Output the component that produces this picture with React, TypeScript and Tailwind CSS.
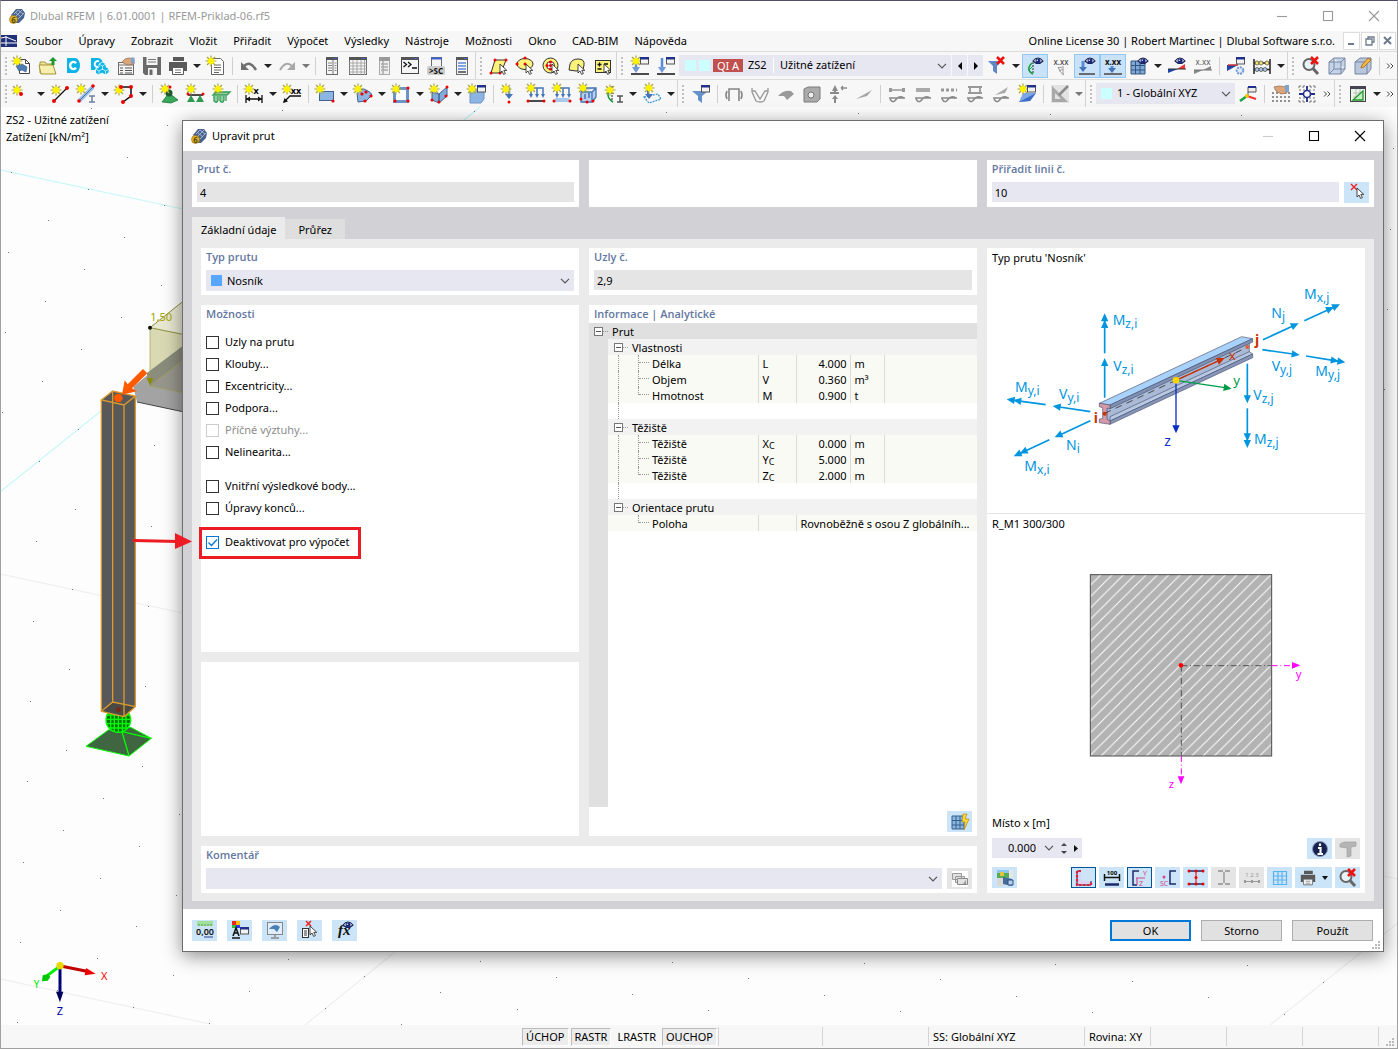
import { useState, type ReactNode } from 'react';

/* ---------- small pieces shared by the icons ---------- */

const Star = ({ x = 5, y = 5 }: { x?: number; y?: number }) => (
  <g transform={`translate(${x} ${y})`}>
    <path d="M0-5.500V5.500M-5.500 0H5.500M-4-4L4 4M4-4L-4 4" stroke="#a8a243" strokeWidth="1.200" />
    <path d="M0-4L1.500-2 4-1.500 2.500 0 4 2.500 1.500 2 0 4-1.500 2-4 2.500-2.500 0-4-1.500-1.500-2z" fill="#fff200" />
    <circle r="2.800" fill="#fff200" />
  </g>
);

const Dots = ({ at, r = 1.5 }: { at: number[][]; r?: number }) => (
  <g fill="#f00000">
    {at.map(([x, y], i) => (
      <circle key={i} cx={x} cy={y} r={r} />
    ))}
  </g>
);

const Cursor = ({ x = 11, y = 8 }: { x?: number; y?: number }) => (
  <path
    transform={`translate(${x} ${y})`}
    d="M0 0v9l2-2 1.600 3.400 1.800-.8-1.600-3.200h3z"
    fill="#fff"
    stroke="#333"
    strokeWidth=".9"
  />
);

const Eye = ({ x = 13, y = 5 }: { x?: number; y?: number }) => (
  <g transform={`translate(${x} ${y})`}>
    <path d="M-5 0Q0-6 5 0Q0 5-5 0z" fill="#e8ebf8" stroke="#1b2250" strokeWidth="1.100" />
    <circle r="2.500" fill="#1a2a80" />
    <circle cx="-.7" cy="-.7" r=".7" fill="#fff" />
  </g>
);

const Win = ({ x = 10, y = 1 }: { x?: number; y?: number }) => (
  <g transform={`translate(${x} ${y})`}>
    <rect x=".5" y=".5" width="8" height="6.500" fill="#f2f2f2" stroke="#555" />
    <rect width="9" height="2.500" fill="#20308c" />
  </g>
);

const RedCross = ({ x = 9, y = 1 }: { x?: number; y?: number }) => (
  <path transform={`translate(${x} ${y})`} d="M1 1L8 8M8 1L1 8" stroke="#ee1111" strokeWidth="2.600" />
);

const Page = ({ x = 4, y = 2, w = 12, h = 16 }: { x?: number; y?: number; w?: number; h?: number }) => (
  <rect x={x + 0.5} y={y + 0.5} width={w - 1} height={h - 1} fill="#f5f5f5" stroke="#6b6b6b" />
);

const Wave = () => (
  <g fill="none" stroke="#8a8a8a" strokeWidth="1.500">
    <path d="M2 14H18M3 15Q6 20 9 15.500T17 14" />
  </g>
);

const Printer = () => (
  <g>
    <path d="M5 1h11v4H5zM1 6h18v9h-3v-3H4v3H1z" fill="#595959" />
    <path d="M4.500 11.500h11v7h-11z" fill="#fff" stroke="#595959" />
    <path d="M7 14h6M7 16.500h6" stroke="#777" />
  </g>
);

const Lens = () => (
  <g fill="none" stroke="#666">
    <circle cx="8" cy="8.500" r="5.500" strokeWidth="2" fill="#e8f2fa" />
    <path d="M12 12.500l5 5.500" strokeWidth="3" />
  </g>
);

const icons: Record<string, ReactNode> = {
  new: (
    <>
      <path d="M7.500 3.500h6l4 4v10h-10z" fill="#fff" stroke="#444" />
      <path d="M13.500 3.500v4h4" fill="none" stroke="#444" />
      <path d="M4 10l6-2 5 3-1 5-4-2-3 1z" fill="#4d7db5" stroke="#2b4d80" strokeWidth=".6" />
      <Star />
    </>
  ),
  open: (
    <>
      <path d="M2 17V6h5l1.500 2H15v9z" fill="#f3e79a" stroke="#a3953c" />
      <path d="M1 9h14l3 9H3z" fill="#f8efae" stroke="#a3953c" />
      <path d="M13.500 9V5H11L15 1l4 4h-2.500v4z" fill="#1f9a2e" />
    </>
  ),
  center: (
    <>
      <path d="M3 2h8a5 7.500 0 0 1 5 7.500 5 7.500 0 0 1-5 7.500H3z" fill="#0bb3e6" />
      <path d="M12 7.200A3.300 3.600 0 1 0 12 11.800" fill="none" stroke="#fff" strokeWidth="2.400" />
    </>
  ),
  cloud: (
    <>
      <path d="M1 2h7a5 6 0 0 1 5 6v6H1z" fill="#0bb3e6" />
      <path d="M9 5.500A2.800 3 0 1 0 8 11" fill="none" stroke="#fff" strokeWidth="2" />
      <path d="M12.500 6l3.500 2v3l3 1.500v4L15.500 19 12 17l-3.500 2L5.500 17v-4L9 11V8z" fill="#0bb3e6" stroke="#fff" strokeWidth=".8" />
      <path d="M9 8l3.500 2L16 8M12.500 10v4M5.500 13l3.500 2 3.500-2M9 15v4M12.500 13l3 2 3.500-2M15.500 15v4" fill="none" stroke="#fff" strokeWidth=".7" />
    </>
  ),
  report: (
    <>
      <Page x={2} y={6} w={16} h={13} />
      <path d="M2 9h16" stroke="#777" />
      <path d="M4 12h3M4 14.500h3M4 17h3M9 12h7M9 14.500h7M9 17h7" stroke="#555" />
      <path d="M6 6l3-3 4-1 5 1v5l-6 1-3-1z" fill="#dba57c" stroke="#91684a" strokeWidth=".7" />
      <path d="M15 1.500h3.500v6H15z" fill="#7ea3cd" />
    </>
  ),
  save: (
    <>
      <path d="M1 1h18v18H3l-2-2z" fill="#6a6a6a" />
      <path d="M4.500 1h11v8h-11zM6 12h9v7H6z" fill="#f4f4f4" />
      <path d="M6 3.500h8M6 6h8" stroke="#777" />
      <path d="M7.500 13.500h3V19h-3z" fill="#6a6a6a" />
    </>
  ),
  print: <Printer />,
  list: (
    <>
      <path d="M5.500 2.500h9l3 3v13h-12z" fill="#fff" stroke="#666" />
      <path d="M8 9h7M8 11.500h7M8 14h7M8 16.500h5" stroke="#666" />
      <Star />
    </>
  ),
  undo: (
    <>
      <path d="M5 10Q11 4 17 14" fill="none" stroke="#707070" strokeWidth="2.500" />
      <path d="M2 6v8h8z" fill="#707070" />
    </>
  ),
  redo: (
    <>
      <path d="M15 10Q9 4 3 14" fill="none" stroke="#a8a8a8" strokeWidth="2" />
      <path d="M18 6v8h-8z" fill="#a8a8a8" />
    </>
  ),
  panel: (
    <>
      <Page x={4} y={1} w={12} h={18} />
      <path d="M4 1h12v3H4z" fill="#555" />
      <path d="M12 2.500h3" stroke="#4060d0" />
      <path d="M11 4v14" stroke="#777" />
      <path d="M6 7h4M6 9.500h4M6 12h4M6 14.500h4M12.500 7h2M12.500 9.500h2M12.500 12h2M12.500 14.500h2" stroke="#888" />
    </>
  ),
  table: (
    <>
      <Page x={1} y={1} w={18} h={18} />
      <path d="M1 1h18v3H1z" fill="#555" />
      <path d="M14 2.500h3" stroke="#4060d0" />
      <path d="M1 7h18M1 10h18M1 13h18M1 16h18M5 4v15M9 4v15M13 4v15M16.500 4v15" stroke="#999" strokeWidth=".8" />
    </>
  ),
  panelGray: (
    <>
      <rect x="5.500" y="1.500" width="10" height="17" fill="#eee" stroke="#aaa" />
      <path d="M5 1h11v4H5z" fill="#999" />
      <path d="M7 8h7M7 11h7M7 14h7M9 5v13" stroke="#aaa" strokeWidth="1.500" />
    </>
  ),
  console: (
    <>
      <rect x="1.500" y="1.500" width="17" height="16" fill="#f5f5f5" stroke="#444" />
      <path d="M1 1h18v3H1z" fill="#555" />
      <path d="M14 2.500h3" stroke="#4060d0" />
      <path d="M3.500 6l3 2.500-3 2.500M8 6l3 2.500L8 11M12 12h5" fill="none" stroke="#111" strokeWidth="1.300" />
    </>
  ),
  script: (
    <>
      <Page x={5} y={1} w={11} h={12} />
      <path d="M5 2.500h11" stroke="#4060d0" strokeWidth="2" />
      <rect x="1" y="10" width="18" height="9" rx="2" fill="#ccc" />
      <text x="10" y="17.500" fontSize="8" fontWeight="bold" textAnchor="middle" fill="#111">&gt;SC</text>
    </>
  ),
  panelBlue: (
    <>
      <Page x={4} y={1} w={12} h={18} />
      <path d="M4 1h12v3H4z" fill="#555" />
      <path d="M12 2.500h3" stroke="#4060d0" />
      <path d="M6 7h8M6 10h8M6 13h8" stroke="#5b8bd6" strokeWidth="1.500" />
      <path d="M6 16h8" stroke="#444" strokeWidth="1.500" />
    </>
  ),
  selPoly: (
    <>
      <path d="M6 4h11l-5 13H2z" fill="#fdf27a" stroke="#333" />
      <Dots at={[[6, 4], [17, 4], [2, 17], [11, 17]]} />
      <Cursor />
    </>
  ),
  selEllipse: (
    <>
      <ellipse cx="10" cy="8" rx="8" ry="5.500" fill="#fdf27a" stroke="#333" />
      <Dots at={[[10, 2], [2, 8], [10, 8]]} />
      <Cursor />
    </>
  ),
  selCircle: (
    <>
      <circle cx="9.500" cy="9.500" r="7.500" fill="#fdf27a" stroke="#333" />
      <circle cx="9.500" cy="9.500" r="4" fill="#fff" stroke="#333" />
      <Dots at={[[9.5, 6], [6, 9.5], [9.5, 9.5], [9.5, 13]]} />
      <Cursor />
    </>
  ),
  selFree: (
    <>
      <path d="M3 8q2-5 8-5 7 0 6 6l-1 5-7 1-7-1z" fill="#fdf27a" stroke="#333" />
      <Cursor />
    </>
  ),
  selPm: (
    <>
      <rect x="2.500" y="4.500" width="15" height="12" fill="#fdf27a" stroke="#333" />
      <path d="M4.500 8.500h4M6.500 6.500v4M4.500 13h4M11 8h4" stroke="#111" strokeWidth="1.300" />
      <Cursor />
    </>
  ),
  loadNew: (
    <>
      <path d="M6 5v10" stroke="#5b8bd6" strokeWidth="2.500" />
      <path d="M2 11h8L6 17z" fill="#6f9bd8" />
      <path d="M1 18h18" stroke="#111" strokeWidth="1.500" />
      <Star x={6} y={5} />
      <Win />
    </>
  ),
  load: (
    <>
      <path d="M6 2v10" stroke="#5b8bd6" strokeWidth="2.500" />
      <path d="M2 11h8L6 17z" fill="#6f9bd8" />
      <path d="M1 18h18" stroke="#111" strokeWidth="1.500" />
      <Win />
    </>
  ),
  filterOff: (
    <>
      <path d="M1 5h14l-5 5v8l-4-3v-5z" fill="#5d88c4" />
      <RedCross x={9} y={0} />
    </>
  ),
  support: (
    <>
      <path d="M8 6v12" stroke="#333" strokeDasharray="2 1" />
      <path d="M7 7Q0 14 8 18" fill="none" stroke="#159b3c" strokeWidth="1.500" />
      <path d="M8 10l-4 4" stroke="#159b3c" />
      <Eye />
    </>
  ),
  dims: (
    <>
      <text x="10" y="9" fontSize="8" textAnchor="middle" fill="#222">x.xx</text>
      <path d="M7 11Q9 17 13 19M7 12l4-1M8 15l4-2M12 10v9" fill="none" stroke="#999" />
    </>
  ),
  loadEye: (
    <>
      <path d="M2 18h16" stroke="#444" strokeWidth="1.500" />
      <path d="M6 5v7" stroke="#5b8bd6" strokeWidth="3" />
      <path d="M2 11h8l-4 5z" fill="#4475b8" />
      <Eye />
    </>
  ),
  loadVal: (
    <>
      <text x="10" y="9" fontSize="8" fontWeight="bold" textAnchor="middle" fill="#111">x.xx</text>
      <path d="M9 10v4" stroke="#5b8bd6" strokeWidth="3" />
      <path d="M5 12h8l-4 5z" fill="#4475b8" />
      <path d="M1 18h18" stroke="#444" strokeWidth="1.500" />
    </>
  ),
  meshEye: (
    <>
      <path d="M2 5h14v13H2z" fill="#7fa9da" stroke="#35557f" />
      <path d="M2 9.500h14M2 14h14M6.500 5v13M11 5v13" stroke="#35557f" />
      <Eye x={14} />
    </>
  ),
  diagEye: (
    <>
      <path d="M1 17v-4h10z" fill="#2144a8" />
      <path d="M10 13l8-5v5z" fill="#e33" />
      <path d="M1 13h18" stroke="#333" />
      <Eye />
    </>
  ),
  diagVal: (
    <>
      <text x="10" y="9" fontSize="8" textAnchor="middle" fill="#555">x.xx</text>
      <path d="M1 18v-4h9zM10 14l8-4v4z" fill="#888" />
      <path d="M1 14h18" stroke="#777" />
    </>
  ),
  diagGear: (
    <>
      <path d="M1 15V9h11z" fill="#2144a8" />
      <path d="M2 9h10" stroke="#c33" strokeWidth="1.500" />
      <Win />
      <circle cx="14" cy="14.500" r="3.300" fill="#dbe8fa" stroke="#6f95d3" strokeWidth="2" strokeDasharray="2 1" />
    </>
  ),
  abacus: (
    <>
      <path d="M2 3v15M18 3v15M2 7h16M2 13.500h16" stroke="#222" strokeWidth="1.500" />
      <g stroke="#443" strokeWidth=".7">
        <circle cx="5" cy="7" r="2" fill="#fae77c" />
        <circle cx="9" cy="7" r="2" fill="#fae77c" />
        <circle cx="15" cy="7" r="2" fill="#fae77c" />
        <circle cx="5" cy="13.500" r="2" fill="#a6c4ee" />
        <circle cx="9" cy="13.500" r="2" fill="#a6c4ee" />
        <circle cx="13" cy="13.500" r="2" fill="#a6c4ee" />
      </g>
    </>
  ),
  zoomOff: (
    <>
      <Lens />
      <RedCross x={9} y={0} />
    </>
  ),
  cube: (
    <path d="M2 6l5-4h11v11l-4 5H2zM2 6h12v12M14 6l4-4M7 2v11h11M7 13l-5 5" fill="#c5d3e6" stroke="#7487a3" />
  ),
  cubeEdit: (
    <>
      <path d="M2 6l5-4h11v11l-4 5H2zM2 6h12v12M14 6l4-4" fill="#b9c6dc" stroke="#7487a3" />
      <path d="M8 12l1-3 6-7 3 2-7 7z" fill="#f6b83c" stroke="#a3641e" strokeWidth=".8" />
    </>
  ),
  node: (
    <>
      <Star x={5} y={6} />
      <Dots at={[[9, 10]]} r={2} />
    </>
  ),
  line: (
    <>
      <path d="M4 17L17 4" stroke="#111" strokeWidth="1.300" />
      <Star x={6} y={6} />
      <Dots at={[[4, 17], [17, 4]]} r={2} />
    </>
  ),
  member: (
    <>
      <path d="M3 17L17 3" stroke="#9cc0ec" strokeWidth="4" />
      <path d="M3 17L17 3" stroke="#4b6f9e" strokeWidth="1" />
      <path d="M13 12h6M13 18h6M16 12v6" stroke="#6c82a6" strokeWidth="1.500" />
      <Star />
      <Dots at={[[3, 17], [17, 2]]} r={1.8} />
    </>
  ),
  polyline: (
    <>
      <path d="M7 3h10v9l-8 6" fill="none" stroke="#111" strokeWidth="1.500" />
      <Star x={5} y={6} />
      <Dots at={[[7, 3], [17, 3], [17, 12], [9, 18]]} r={2} />
    </>
  ),
  nodeSupport: (
    <>
      <path d="M10 9l-7 9 9 1 7-3z" fill="#39a85a" stroke="#14692f" strokeWidth=".7" />
      <circle cx="10" cy="9" r="3.500" fill="#1f5a30" />
      <Star x={6} y={5} />
      <Dots at={[[11, 3]]} />
    </>
  ),
  lineSupport: (
    <>
      <path d="M3 11h15" stroke="#111" strokeWidth="1.500" />
      <path d="M6 11l-4 7h8zM15 11l-4 7h8z" fill="#2f9a50" />
      <Star x={6} y={5} />
      <Dots at={[[3, 10], [18, 10]]} />
    </>
  ),
  surfSupport: (
    <>
      <path d="M2 11l3-3h14l-3 3zM3 12v5q3 3 4-1v-4M9 12v5q3 3 4-1v-4M15 12v5" fill="#8fd0a2" stroke="#359c57" strokeWidth="1.300" />
      <Star x={7} y={5} />
    </>
  ),
  dim: (
    <>
      <path d="M2 11v8M18 11v8M2 15h16" stroke="#111" strokeWidth="1.300" />
      <path d="M2 15l4-2.500v5zM18 15l-4-2.500v5z" fill="#111" />
      <text x="12" y="10" fontSize="9" fontWeight="bold" textAnchor="middle">x</text>
      <Star />
    </>
  ),
  dimXX: (
    <>
      <path d="M2 18L8 12h11" fill="none" stroke="#111" strokeWidth="1.300" />
      <path d="M1 19l1.500-5 3.500 3.500z" fill="#111" />
      <text x="14" y="10" fontSize="9" fontWeight="bold" textAnchor="middle">xx</text>
      <Star />
    </>
  ),
  surface: (
    <>
      <rect x="4.500" y="7.500" width="14" height="9" fill="#8db5e3" stroke="#3f6492" />
      <Star />
      <Dots at={[[18, 17]]} r={1.6} />
    </>
  ),
  surfCurved: (
    <>
      <path d="M4 9q5-6 9-3 5 2 6 5l-6 6-8 1z" fill="#8db5e3" stroke="#3f6492" />
      <Star />
      <Dots at={[[9, 10], [18, 12], [13, 8], [12, 17]]} r={1.6} />
    </>
  ),
  opening: (
    <>
      <rect x="3.500" y="4.500" width="13" height="13" fill="#fff" stroke="#6d94c6" strokeWidth="3" />
      <Star />
      <Dots at={[[4, 17], [17, 17], [17, 4]]} r={1.6} />
    </>
  ),
  solid: (
    <>
      <path d="M3 8l7 2v9l-7-3zM10 10l8-7v9l-8 7z" fill="#82abdc" stroke="#3f6492" />
      <Star />
      <Dots at={[[3, 16], [10, 18], [18, 3], [17, 12]]} r={1.5} />
    </>
  ),
  block: (
    <>
      <path d="M3 8l3-2h11v9l-3 4H3z" fill="#8db5e3" stroke="#6d94c6" />
      <Star />
      <Win x={10} y={1} />
    </>
  ),
  nodalLoad: (
    <>
      <path d="M9 3v8" stroke="#6f9bd8" strokeWidth="2.500" />
      <path d="M5 10h8l-4 5z" fill="#4475b8" />
      <Star x={6} y={5} />
      <Dots at={[[9, 18]]} />
    </>
  ),
  memberLoad: (
    <>
      <path d="M4 4h13v7M11 4v7M5 4v7" fill="none" stroke="#4475b8" strokeWidth="1.500" />
      <path d="M3 10h4l-2 4zM9 10h4l-2 4zM15 10h4l-2 4z" fill="#4475b8" />
      <path d="M3 17h14" stroke="#111" strokeWidth="1.500" />
      <Star x={5} y={4} />
      <Dots at={[[2, 17], [18, 17]]} />
    </>
  ),
  surfLoad: (
    <>
      <path d="M3 14h14v4H3z" fill="#a9c8ee" />
      <path d="M4 4h13v7M11 4v7M5 4v7" fill="none" stroke="#4475b8" strokeWidth="1.500" />
      <path d="M3 10h4l-2 4zM9 10h4l-2 4zM15 10h4l-2 4z" fill="#4475b8" />
      <Star x={5} y={4} />
      <Dots at={[[2, 17], [18, 17]]} />
    </>
  ),
  solidLoad: (
    <>
      <path d="M3 8l4-4h11v9l-4 5H3zM14 8v10M3 8h11l4-4" fill="#b7cfee" stroke="#4475b8" strokeWidth="1.300" />
      <path d="M7 10v5M11 9v5" stroke="#4475b8" strokeWidth="1.500" />
      <Star x={5} y={4} />
      <Dots at={[[3, 15], [9, 18], [15, 17]]} />
    </>
  ),
  imperf: (
    <>
      <path d="M8 2v16" stroke="#222" strokeDasharray="2 1" />
      <path d="M7 3Q0 12 9 18" fill="none" stroke="#159b3c" strokeWidth="1.600" />
      <path d="M13 12h6M13 18h6M16 12v6" stroke="#555" strokeWidth="1.500" />
      <Star x={6} y={6} />
    </>
  ),
  freeLoad: (
    <>
      <path d="M2 13l14-3 3 5-12 4z" fill="none" stroke="#3d9ad6" strokeDasharray="2 1" strokeWidth="1.300" />
      <path d="M6 5v8" stroke="#4475b8" strokeWidth="2" />
      <path d="M3 10h8l-4 5z" fill="#4475b8" />
      <Star x={7} y={4} />
    </>
  ),
  filterWin: (
    <>
      <path d="M1 7h16l-6 5v7l-4-3v-4z" fill="#6391cc" />
      <Win />
    </>
  ),
  g1: <path d="M5 17V5h10v12M3 7Q1 11 3 15M17 7q2 4 0 8" fill="none" stroke="#858585" strokeWidth="1.600" />,
  g2: <path d="M2 4v4l4 9Q10 19 14 17l4-9V4M2 7h3l5 8 5-8h3" fill="none" stroke="#999" strokeWidth="1.300" />,
  g3: <path d="M2 12q5-6 13-5l3 3-7 6-3-4z" fill="#9a9a9a" />,
  g4: (
    <>
      <path d="M2 5l4-2h12v12l-3 3H2z" fill="#ababab" stroke="#7b7b7b" />
      <circle cx="9" cy="11" r="3" fill="#eee" stroke="#777" />
    </>
  ),
  g5: (
    <>
      <path d="M7 1l3 6H8v3H6V7H4zM7 11l3 4H8v4H6v-4H4z" fill="#8a8a8a" />
      <path d="M13 4h6M13 4l2-2M13 4l2 2" stroke="#8a8a8a" strokeWidth="1.300" />
      <path d="M2 9h9" stroke="#8a8a8a" strokeWidth="2" />
    </>
  ),
  g6: <path d="M2 15L18 6l-5 6z" fill="#a5a5a5" />,
  w1: (
    <>
      <path d="M3 6h14" stroke="#999" strokeWidth="1.500" />
      <path d="M2 4h3v4H2zM15 4h3v4h-3z" fill="#999" />
      <Wave />
    </>
  ),
  w2: (
    <>
      <path d="M3 6h14" stroke="#aaa" strokeWidth="4" />
      <Wave />
    </>
  ),
  w3: (
    <>
      <path d="M2 6h16" stroke="#999" strokeWidth="3" strokeDasharray="3 2" />
      <Wave />
    </>
  ),
  w4: (
    <>
      <path d="M3 3h14M5 3v6M15 3v6M3 9h14" stroke="#999" strokeWidth="1.800" />
      <Wave />
    </>
  ),
  w5: (
    <>
      <path d="M4 11L17 3l-3 6z" fill="#aaa" />
      <Wave />
    </>
  ),
  planeWin: (
    <>
      <path d="M2 18l4-9h13l-6 8z" fill="#7da7e6" />
      <path d="M2 18l17-9-6 8z" fill="#3c6cc8" />
      <Star x={6} y={5} />
      <Win />
    </>
  ),
  design: (
    <>
      <path d="M1 1h18v18H1z" fill="#e2e2e2" />
      <path d="M2 2v16h16z" fill="#a8a8a8" />
      <path d="M5 9v6h6z" fill="#e2e2e2" />
      <path d="M9 11L18 2" stroke="#8a8a8a" strokeWidth="2.500" />
    </>
  ),
  axesWin: (
    <>
      <path d="M10 12V3h8v5h-8" fill="#eee" stroke="#555" />
      <path d="M10 3h8" stroke="#20308c" strokeWidth="2" />
      <path d="M9 12l9 3" stroke="#e33" strokeWidth="2" />
      <path d="M9 12l-7 5" stroke="#1aa34a" strokeWidth="2.500" />
      <circle cx="9" cy="12" r="2" fill="#f5c400" />
    </>
  ),
  gridHand: (
    <>
      <path d="M2 8v11M6 8v11M10 8v11M14 8v11M18 8v11M1 9h18M1 13h18M1 17h18" stroke="#777" strokeWidth="1.200" strokeDasharray="2 2" />
      <path d="M3 3l5-1 8 1v6l-6 1-5-3z" fill="#dba57c" stroke="#91684a" strokeWidth=".7" />
      <path d="M14 1h4v7h-4z" fill="#7ea3cd" />
    </>
  ),
  gridSnap: (
    <>
      <path d="M3 1v18M17 1v18M1 3h18M1 17h18M7 1v18M13 1v18" stroke="#777" strokeDasharray="2 2" />
      <path d="M10 2v16M2 10h16" stroke="#20308c" strokeWidth="1.800" />
      <circle cx="10" cy="10" r="3.500" fill="#fff" stroke="#20308c" strokeWidth="1.600" />
    </>
  ),
  gridGreen: (
    <>
      <rect x="2.500" y="2.500" width="15" height="15" fill="#eaf5ea" stroke="#444" />
      <path d="M2 2h16v3H2z" fill="#445" />
      <path d="M5 9h10M5 13h10M8 5v12M12 5v12" stroke="#bbb" />
      <path d="M5 16l10-9v9z" fill="#bff0bf" stroke="#27962f" strokeWidth="1.300" />
    </>
  ),
  pick: (
    <>
      <path d="M4 1l6 6M10 1L4 7" stroke="#e22" strokeWidth="1.400" />
      <Cursor x={10} y={5} />
    </>
  ),
  meshFlash: (
    <>
      <path d="M2 4h12v13H2z" fill="#8db6dc" stroke="#35618f" />
      <path d="M2 8.500h12M2 13h12M6 4v13M10 4v13" stroke="#35618f" />
      <path d="M13 2h4l-2 5h4l-5 11 1-8h-3z" fill="#ffd83a" stroke="#b58a10" strokeWidth=".7" />
    </>
  ),
  stack: (
    <>
      <path d="M2 2h16v16H2z" fill="#fff" />
      <path d="M2.500 4.500h9v6h-9zM5.500 7.500h9v6h-9z" fill="#e2e2e2" stroke="#999" />
      <path d="M7.500 9.500h10v6h-10z" fill="#e2e2e2" stroke="#888" />
      <path d="M13 15l3-4v4z" fill="#999" />
    </>
  ),
  units: (
    <>
      <path d="M2 1h16v5H2z" fill="#9fe09a" />
      <path d="M4 4v2M7 4v2M10 4v2M13 4v2M16 4v2" stroke="#5a9a58" />
      <text x="10" y="15" fontSize="9" fontWeight="600" textAnchor="middle" fill="#111">0,00</text>
      <path d="M9 17h9" stroke="#2a3f9a" />
    </>
  ),
  colors: (
    <>
      <path d="M2 1h4v4H2z" fill="#e22" />
      <path d="M6 1h4v4H6z" fill="#fb0" />
      <path d="M2 5h4v3H2z" fill="#3b3" />
      <path d="M6 5h4v3H6z" fill="#33e" />
      <path d="M3 16l3-8 3 8M4 13h4M2 18h8" fill="none" stroke="#111" strokeWidth="1.500" />
      <Win x={10} y={7} />
    </>
  ),
  monitor: (
    <>
      <rect x="2.500" y="2.500" width="15" height="12" fill="#dfeefa" stroke="#888" />
      <path d="M4 9q6-7 11-2l-3 5-3-3z" fill="#4b7fb8" />
      <path d="M10 14v3M6 18h8" stroke="#888" strokeWidth="1.500" />
    </>
  ),
  selList: (
    <>
      <path d="M6 1l5 5M11 1L6 6" stroke="#e22" strokeWidth="1.500" />
      <rect x="2.500" y="8.500" width="6" height="9" fill="#fff" stroke="#333" />
      <path d="M4 11h3M4 13h3M4 15h3" stroke="#333" />
      <Cursor x={10} y={6} />
    </>
  ),
  fx: (
    <>
      <text x="3" y="15" fontSize="15" fontWeight="bold" fontStyle="italic" fontFamily="Liberation Serif" fill="#111">fx</text>
      <Eye x={13} y={5} />
    </>
  ),
  info: (
    <>
      <circle cx="10" cy="10" r="7.500" fill="#16224f" stroke="#8795bb" />
      <path d="M10 4.500v2.500M8 9h2.500v6M7.500 15h5.500" stroke="#fff" strokeWidth="2.200" />
    </>
  ),
  tshape: (
    <path d="M2 5l4-2h12v4l-5 1v9l-4 1V9L2 8z" fill="#b5b5b5" stroke="#999" strokeWidth=".6" />
  ),
  image: (
    <>
      <path d="M2 2h12v8H2z" fill="#57ad57" />
      <path d="M2 2h12v3H2z" fill="#8bc7ee" />
      <path d="M5 4h4v4H5z" fill="#e0c43a" />
      <path d="M2 10h8v8H2z" fill="#d8d8d8" />
      <path d="M14 2h4v8h-4z" fill="#e6e6e6" />
      <path d="M8 9l9 2v7l-9-2z" fill="#456a9a" />
      <path d="M13 12h5v5h-5z" fill="#b8d0ee" stroke="#2b4d80" />
    </>
  ),
  secPoints: (
    <>
      <path d="M3 3h4v8q0 2 2 2h8v4H3z" fill="#dcd3f2" />
      <path d="M3 3h4M3 3v14h14v-4" fill="none" stroke="#1b2a6b" />
      <path d="M7 3H3v14h14v-4" fill="none" stroke="#e02030" strokeWidth="2.200" strokeDasharray="2.500 1.500" />
    </>
  ),
  sec100: (
    <>
      <text x="10" y="7" fontSize="6" fontWeight="bold" textAnchor="middle">100</text>
      <path d="M2.500 6v7M17.500 6v7M3 9.500h14" stroke="#111" strokeWidth="1.500" />
      <path d="M3 16.500h14" stroke="#1b2a6b" strokeWidth="2.500" />
    </>
  ),
  secAxes: (
    <>
      <path d="M9 3H3v14h4" fill="none" stroke="#1b2a6b" strokeWidth="1.500" />
      <path d="M6 10h9M7 10v7" stroke="#d04a8c" strokeWidth="1.200" />
      <text x="13" y="8" fontSize="7" fill="#d04a8c">Y</text>
      <text x="9" y="18" fontSize="7" fill="#d04a8c">Z</text>
    </>
  ),
  secSC: (
    <>
      <path d="M18 3h-6v13h6" fill="none" stroke="#1b2a6b" strokeWidth="1.500" />
      <circle cx="6" cy="9" r="1.500" fill="#d04a8c" />
      <text x="2" y="18" fontSize="7" fill="#d04a8c">SC</text>
    </>
  ),
  secI: (
    <>
      <path d="M10 3v13" stroke="#e22" strokeWidth="1.200" />
      <path d="M3 3h14M3 16h14" stroke="#1b2a6b" strokeWidth="1.500" />
      <Dots at={[[3, 3], [10, 3], [17, 3], [10, 9.5], [3, 16], [10, 16], [17, 16]]} />
    </>
  ),
  secIGray: <path d="M4 3h5M11 3h5M4 16h5M11 16h5M10 4v11" stroke="#8f8f8f" strokeWidth="1.300" />,
  sec123: (
    <>
      <text x="10" y="9" fontSize="6" textAnchor="middle" fill="#999">1 2 3</text>
      <path d="M3 13.500h14" stroke="#999" />
      <path d="M3 12v3M10 12v3M17 12v3" stroke="#999" strokeWidth="2" />
    </>
  ),
  secGrid: <path d="M3.500 3.500h13v13h-13zM3.500 8h13M3.500 12h13M8 3.500v13M12 3.500v13" fill="none" stroke="#5ab4f0" strokeWidth="1.200" />,
};

const Icon = ({ name }: { name: string }) => (
  <svg viewBox="0 0 20 20" className="size-5 shrink-0 overflow-visible" aria-hidden="true">
    {icons[name]}
  </svg>
);

const AppLogo = () => (
  <svg viewBox="0 0 16 16" className="size-4 shrink-0" aria-hidden="true">
    <path d="M2 7l5-6 6 0 3 4-1 5-5 5-3 0z" fill="#4a638e" />
    <path d="M5 6l4-4M7 8l6-6M9 11l6-6M6 4l6 5M9 2l5 4" stroke="#b4c6e2" strokeWidth=".8" />
    <circle cx="4.500" cy="11.500" r="4" fill="#e5b729" stroke="#8d6a10" strokeWidth=".6" />
    <text x="4.500" y="14.500" fontSize="8" fontWeight="bold" textAnchor="middle" fill="#5f480b">6</text>
  </svg>
);

const Chevron = () => (
  <svg viewBox="0 0 10 6" className="pointer-events-none absolute right-1 top-1/2 h-1.5 w-2.5 -translate-y-1/2" aria-hidden="true">
    <path d="M1 .8l4 4 4-4" fill="none" stroke="#555" strokeWidth="1.200" />
  </svg>
);

/* ---------- tool bars ---------- */

// '|' separator, ':' start of a new bar, 'v' drop-down arrow, '-v' greyed arrow, '>>' overflow, '*' prefix = pressed
const barOne =
  'new open center cloud report save print v list | undo v redo -v | panel table panelGray console script panelBlue : selPoly selEllipse selCircle selFree selPm : loadNew load';
const barOneEnd =
  'filterOff v *support dims *loadEye *loadVal meshEye v diagEye diagVal | diagGear abacus v : zoomOff cube cubeEdit | >>';
const barTwo =
  'node v line member v polyline v | nodeSupport lineSupport surfSupport | dim v dimXX | surface v surfCurved v opening v solid v block | nodalLoad memberLoad surfLoad solidLoad imperf v freeLoad v : filterWin | g1 g2 g3 g4 g5 g6 | w1 w2 w3 w4 w5 planeWin | design -v :';
const barTwoEnd = 'axesWin | gridHand gridSnap >> : gridGreen v >>';

const Handle = ({ first = false }: { first?: boolean }) => (
  <div className={first ? 'flex h-full w-2 items-center pl-1' : 'flex h-full w-[11px] items-center border-l border-[#d4d4d4] pl-1'}>
    <div className="h-[18px] border-l-2 border-dotted border-[#c0c0c0]" />
  </div>
);

function BarItems({ items }: { items: string }) {
  return items.split(' ').map((item, i) => {
    if (item === '|')
      return (
        <div key={i} className="flex w-[7px] justify-center">
          <div className="h-[18px] w-px bg-[#cfcfcf]" />
        </div>
      );
    if (item === ':') return <Handle key={i} />;
    if (item === 'v' || item === '-v')
      return (
        <button key={i} aria-label="Více" disabled={item === '-v'} className="flex w-3 justify-center text-[#222] disabled:text-[#777]">
          <svg viewBox="0 0 8 4" className="h-1 w-2">
            <path d="M0 0h8L4 4z" fill="currentColor" />
          </svg>
        </button>
      );
    if (item === '>>')
      return (
        <button key={i} aria-label="Další příkazy" className="flex w-3.5 justify-center">
          <svg viewBox="0 0 8 6" className="h-1.5 w-2">
            <path d="M1 .5L3.500 3 1 5.500M4.500 .5L7 3 4.500 5.500" fill="none" stroke="#444" />
          </svg>
        </button>
      );
    const pressed = item.startsWith('*');
    const name = pressed ? item.slice(1) : item;
    return (
      <button
        key={i}
        aria-label={name}
        className={`flex h-6 w-[26px] shrink-0 items-center justify-center ${pressed ? 'border border-[#92c8f2] bg-[#c9e2f7]' : ''}`}
      >
        <Icon name={name} />
      </button>
    );
  });
}

const menus = ['Soubor', 'Úpravy', 'Zobrazit', 'Vložit', 'Přiřadit', 'Výpočet', 'Výsledky', 'Nástroje', 'Možnosti', 'Okno', 'CAD-BIM', 'Nápověda'];

function WindowButtons({ color, minColor }: { color: string; minColor: string }) {
  return (
    <div className="ml-auto flex h-full">
      {['M0 5.500h10', 'M.5.500h9v9h-9z', 'M0 0l10 10M10 0L0 10'].map((d, i) => (
        <button key={d} aria-label={['Minimalizovat', 'Maximalizovat', 'Zavřít'][i]} className="flex h-full w-[46px] items-center justify-center">
          <svg viewBox="0 0 10 10" className="size-2.5 overflow-visible">
            <path d={d} fill="none" stroke={i === 0 ? minColor : color} strokeWidth="1.100" />
          </svg>
        </button>
      ))}
    </div>
  );
}

/* ---------- model view ---------- */

const gridPoints: number[][] = [];
for (let m = -20; m < 40; m++) {
  for (let n = -40; n < 50; n++) {
    const x = 120 + m * 76.1 - n * 39.58;
    const y = 210 + m * 16.5 + n * 31.83;
    if (x > 0 && x < 2000 && y > 0 && y < 1400) gridPoints.push([Math.round(x), Math.round(y)]);
  }
}

function ModelView() {
  return (
    <svg className="absolute inset-0 size-full" aria-label="Model">
      <g transform="translate(-1 -107)">
        <path d="M0 492L101 411M154 372L480 107M0 170L183 209" stroke="#c8f7f8" strokeWidth="1.200" />
        <path d="M0 574L183 613M0 979L210 1024M305 1025L395 952M1270 1025L1398 923M1384 876L1398 879" stroke="#efefef" strokeWidth="1.200" />
      </g>
      {gridPoints.map(([x, y]) => (
        <rect key={`${x}-${y}`} x={x} y={y} width="1" height="1" fill="#777" />
      ))}
      {/* column with slab corner and support, drawn at three units per pixel */}
      <g transform="translate(-1 183) scale(.33333)">
        <path d="M400 290L548 168V365L411 336z" fill="#a3a3a3" />
        <path d="M411 336L548 365" stroke="#444" strokeWidth="3" />
        <path d="M450 113L548 35V210L450 288z" fill="#d9d9b4" />
        <path d="M450 113L548 35V133z" fill="#e7e7d2" />
        <path d="M440 250L548 168V212L450 288z" fill="#8a8c7c" />
        <path d="M450 288L548 212V308z" fill="#96968c" />
        <path d="M450 113L548 35M450 113L548 133" stroke="#8f8f40" strokeWidth="3" />
        <path d="M450 113V270M450 288L548 308M450 288L548 212" fill="none" stroke="#a2a250" strokeWidth="2" />
        <path d="M440 264h20l-10 22z" fill="#8c8c00" />
        <circle cx="450" cy="113" r="6" fill="#111" />
        <text x="451" y="94" fontSize="33" fill="#a6a600">1,50</text>
        <path d="M325 1320L258 1369 387 1398 454 1345 392 1312z" fill="#3f6640" stroke="#0f0" strokeWidth="3" />
        <path d="M362 1312L387 1398M366 1325L454 1345" stroke="#0f0" strokeWidth="4" />
        <circle cx="355" cy="1290" r="37" fill="#04730a" stroke="#0f0" strokeWidth="4" />
        <path d="M320 1275h70M318 1288h74M320 1301h70M327 1314h56M332 1262v56M343 1256v70M355 1254v73M367 1256v70M378 1262v56" stroke="#0f0" strokeWidth="4" />
        <path d="M304 330L338 303 406 318V1250L372 1280 304 1264z" fill="#585858" />
        <path d="M304 1264L338 1236 406 1250 372 1280z" fill="#404038" opacity=".6" />
        <circle cx="355" cy="1259" r="7" fill="#7a2814" />
        <path d="M304 330L338 303 406 318 372 345zM304 330V1264L372 1280 406 1250V318M338 303V1236M372 345V1280M304 1264L338 1236 406 1250" fill="none" stroke="#dc9a2e" strokeWidth="4" />
        <circle cx="355" cy="324" r="13" fill="#ff5a00" />
        <path d="M429 237L442 250 396 295 411 304 366 314 374 271 383 283z" fill="#ff5a00" />
      </g>
      {/* global axes */}
      <g transform="translate(-1 733) scale(.33333)">
        <path d="M182 378L260 394" stroke="#c00000" strokeWidth="9" />
        <path d="M258 384L287 401 254 406z" fill="#f00000" />
        <path d="M180 380V460" stroke="#000078" strokeWidth="9" />
        <path d="M168 455h22L180 487z" fill="#00005a" />
        <path d="M178 380L140 408" stroke="#0e0" strokeWidth="9" />
        <path d="M128 406l17-4 6 9-8 11-17 2z" fill="#00c800" />
        <circle cx="180" cy="377" r="11" fill="#e6d800" />
        <text x="303" y="419" fontSize="33" fill="#f00">X</text>
        <text x="101" y="443" fontSize="30" fill="#0e0">Y</text>
        <text x="170" y="525" fontSize="33" fill="#00a">Z</text>
      </g>
    </svg>
  );
}

/* ---------- dialog ---------- */

const Heading = ({ children, htmlFor }: { children: ReactNode; htmlFor?: string }) => (
  <label htmlFor={htmlFor} className="block h-[18px] px-[5px] font-['Open_Sans','Noto_Sans',sans-serif] text-[11px] font-semibold leading-[18px] text-[#64779f]">
    {children}
  </label>
);

function Field({ id, label, value, readOnly, children }: { id: string; label: string; value: string; readOnly?: boolean; children?: ReactNode }) {
  return (
    <div className="h-[47px] bg-white">
      <Heading htmlFor={id}>{label}</Heading>
      <div className="mt-1 flex gap-[5px] px-[5px]">
        <input
          id={id}
          defaultValue={value}
          readOnly={readOnly}
          className={`h-5 w-full min-w-0 px-[3px] outline-none ${readOnly ? 'bg-[#e5e5e5]' : 'bg-[#e7e7f2]'}`}
        />
        {children}
      </div>
    </div>
  );
}

function ToolButton({ name, state = 'on' }: { name: string; state?: 'on' | 'off' | 'pressed' }) {
  return (
    <button
      aria-label={name}
      disabled={state === 'off'}
      className={`flex h-[21px] w-[25px] shrink-0 items-center justify-center ${
        state === 'off' ? 'bg-[#e5e5e5]' : state === 'pressed' ? 'border border-[#005499] bg-[#cce4f7]' : 'bg-[#cce4f7]'
      }`}
    >
      <Icon name={name} />
    </button>
  );
}

function Option({ label, checked, disabled, children }: { label: string; checked?: boolean; disabled?: boolean; children?: ReactNode }) {
  const [on, setOn] = useState(!!checked);
  return (
    <label className={`relative flex h-[22px] w-fit items-center gap-1.5 ${disabled ? 'text-[#8c8c8c]' : ''}`}>
      <span className="relative flex size-[13px]">
        <input
          type="checkbox"
          checked={on}
          disabled={disabled}
          onChange={(e) => setOn(e.target.checked)}
          className="size-[13px] appearance-none border border-[#333] bg-white checked:border-[#0078d7] disabled:border-[#ccc]"
        />
        {on && (
          <svg viewBox="0 0 13 13" className="pointer-events-none absolute inset-0 size-[13px]">
            <path d="M2.500 6.500l3 3 5.500-6" fill="none" stroke="#0078d7" strokeWidth="1.300" />
          </svg>
        )}
      </span>
      {label}
      {children}
    </label>
  );
}

type Leaf = { name: string; symbol?: ReactNode; value: string; unit?: ReactNode };

const groups: { title: string; rows: Leaf[] }[] = [
  {
    title: 'Vlastnosti',
    rows: [
      { name: 'Délka', symbol: 'L', value: '4.000', unit: 'm' },
      { name: 'Objem', symbol: 'V', value: '0.360', unit: 'm³' },
      { name: 'Hmotnost', symbol: 'M', value: '0.900', unit: 't' },
    ],
  },
  {
    title: 'Těžiště',
    rows: [
      { name: 'Těžiště', symbol: <>X<small className="align-[-1px] text-[9px]">C</small></>, value: '0.000', unit: 'm' },
      { name: 'Těžiště', symbol: <>Y<small className="align-[-1px] text-[9px]">C</small></>, value: '5.000', unit: 'm' },
      { name: 'Těžiště', symbol: <>Z<small className="align-[-1px] text-[9px]">C</small></>, value: '2.000', unit: 'm' },
    ],
  },
  { title: 'Orientace prutu', rows: [{ name: 'Poloha', value: 'Rovnoběžně s osou Z globálníh...' }] },
];

const Toggle = () => (
  <button aria-label="Sbalit" className="flex size-[9px] shrink-0 items-center justify-center border border-[#777] bg-white">
    <span className="h-px w-[5px] bg-[#555]" />
  </button>
);

const Cell = ({ children, className = '' }: { children?: ReactNode; className?: string }) => (
  <td className="border-l border-[#dadada] bg-[#f9faf3] p-0">
    <div className={`h-4 whitespace-nowrap leading-[18px] ${className}`}>{children}</div>
  </td>
);

function InfoTable() {
  return (
    <table className="w-full table-fixed border-collapse">
      <colgroup>
        <col className="w-[19px]" />
        <col className="w-[150px]" />
        <col className="w-[38px]" />
        <col className="w-[54px]" />
        <col className="w-[34px]" />
        <col />
      </colgroup>
      <tbody>
        <tr className="h-4 bg-[#e0e0e0]">
          <td colSpan={6} className="p-0">
            <div className="flex h-4 items-center pl-[5px] leading-[18px]">
              <Toggle />
              <span className="mr-1 w-[5px] border-t border-dotted border-[#999]" />
              <span className="h-4">Prut</span>
            </div>
          </td>
        </tr>
        {groups.map((group, g) => {
          const lastGroup = g === groups.length - 1;
          return [
            <tr key={group.title} className="h-4">
              <td className="p-0" />
              <td colSpan={5} className="bg-[#f2f2f2] p-0">
                <div className="flex h-4 items-center pl-1.5 leading-[18px]">
                  <Toggle />
                  <span className="mr-1 w-[5px] border-t border-dotted border-[#999]" />
                  <span className="h-4">{group.title}</span>
                </div>
              </td>
            </tr>,
            ...group.rows.map((row, i) => (
              <tr key={group.title + i} className="h-4">
                <td className="p-0" />
                <td className="bg-[#f9faf3] p-0">
                  <div className="flex h-4 leading-[18px]">
                    <span className={`w-[11px] ${lastGroup ? '' : 'border-r border-dotted border-[#999]'}`} />
                    <span className={`w-5 border-r border-dotted border-[#999] ${i === group.rows.length - 1 ? 'h-2' : ''}`} />
                    <span className="mr-[3px] h-2 w-2.5 border-b border-dotted border-[#999]" />
                    {row.name}
                  </div>
                </td>
                <Cell className="pl-1">{row.symbol}</Cell>
                {row.unit ? (
                  <>
                    <Cell className="pr-[3px] text-right">{row.value}</Cell>
                    <Cell className="pl-1">{row.unit}</Cell>
                    <Cell />
                  </>
                ) : (
                  <td colSpan={3} className="border-l border-[#dadada] bg-[#f9faf3] p-0">
                    <div className="h-4 whitespace-nowrap pl-1 leading-[18px]">{row.value}</div>
                  </td>
                )}
              </tr>
            )),
            !lastGroup && (
              <tr key={group.title + 'gap'} className="h-4">
                <td className="p-0" />
                <td colSpan={5} className="p-0">
                  <div className="h-4 w-[11px] border-r border-dotted border-[#999]" />
                </td>
              </tr>
            ),
          ];
        })}
      </tbody>
    </table>
  );
}

type ForceProps = { from: number[]; to: number[]; double?: boolean; color?: string; width?: number };

function Force({ from, to, double, color = '#0095df', width = 5 }: ForceProps) {
  const angle = (Math.atan2(to[1] - from[1], to[0] - from[0]) * 180) / Math.PI;
  const length = Math.hypot(to[0] - from[0], to[1] - from[1]);
  return (
    <g transform={`translate(${from[0]} ${from[1]}) rotate(${angle})`} fill={color}>
      <path d={`M0 0H${length - 10}`} stroke={color} strokeWidth={width} />
      <path d={`M${length} 0l-24-11v22z`} />
      {double && <path d={`M${length - 20} 0l-24-11v22z`} />}
    </g>
  );
}

const Sub = ({ x, y, main, sub }: { x: number; y: number; main: string; sub: string }) => (
  <text x={x} y={y} fontSize="42" fill="#0095df">
    {main}
    <tspan dy="9" fontSize="36">{sub}</tspan>
  </text>
);

function BeamPicture() {
  return (
    <svg viewBox="21 90 1134 729" className="mx-auto block h-[243px] w-[378px]" aria-label="Typ prutu Nosník">
      <path d="M380 502L808 302V346L380 548z" fill="#a9b9d6" stroke="#4c5674" strokeWidth="2" />
      <path d="M390 530L808 335 818 342 390 543z" fill="#b9c8e2" stroke="#4c5674" strokeWidth="2" />
      <path d="M390 543L818 342V353L390 553z" fill="#8796b8" stroke="#4c5674" strokeWidth="2" />
      <path d="M358 490L785 290 818 296 390 495z" fill="#a9d2fb" stroke="#4c5674" strokeWidth="2" />
      <path d="M390 495L818 296V306L390 506z" fill="#7f90b4" stroke="#4c5674" strokeWidth="2" />
      <path d="M358 490L390 495V506L381 504V538L390 543V553L358 548V537L368 536V503L358 500z" fill="#d79aa8" stroke="#4c5674" strokeWidth="2" />
      <path d="M374 520L802 322" stroke="#333" strokeWidth="2.500" strokeDasharray="20 16" />
      <circle cx="374" cy="521" r="6" fill="#c83200" />
      <circle cx="802" cy="321" r="6" fill="#e0603c" />
      <Force from={[588, 421]} to={[734, 354]} color="#c83200" width={4} />
      <Force from={[588, 421]} to={[755, 446]} color="#009b48" width={4} />
      <Force from={[588, 421]} to={[588, 580]} color="#0a2fc0" width={4} />
      <circle cx="588" cy="421" r="10" fill="#ffd500" />
      <text x="746" y="360" fontSize="40" fill="#c83200">x</text>
      <text x="760" y="434" fontSize="40" fill="#009b48">y</text>
      <text x="553" y="618" fontSize="42" fill="#0a2fc0">z</text>
      <text x="341" y="549" fontSize="42" fontWeight="bold" fill="#c83200">i</text>
      <text x="825" y="314" fontSize="42" fontWeight="bold" fill="#c83200">j</text>
      <Force from={[374, 340]} to={[374, 220]} double />
      <Force from={[374, 473]} to={[374, 354]} />
      <Force from={[331, 515]} to={[218, 498]} />
      <Force from={[197, 494]} to={[80, 478]} double />
      <Force from={[331, 542]} to={[224, 592]} />
      <Force from={[208, 599]} to={[101, 649]} double />
      <Force from={[849, 299]} to={[956, 250]} />
      <Force from={[973, 242]} to={[1080, 193]} double />
      <Force from={[847, 329]} to={[959, 345]} />
      <Force from={[978, 348]} to={[1096, 367]} double />
      <Force from={[802, 371]} to={[802, 490]} />
      <Force from={[802, 505]} to={[802, 624]} double />
      <Sub x={398} y={255} main="M" sub="z,i" />
      <Sub x={400} y={392} main="V" sub="z,i" />
      <Sub x={105} y={457} main="M" sub="y,i" />
      <Sub x={237} y={478} main="V" sub="y,i" />
      <Sub x={258} y={630} main="N" sub="i" />
      <Sub x={133} y={693} main="M" sub="x,i" />
      <Sub x={874} y={235} main="N" sub="j" />
      <Sub x={972} y={177} main="M" sub="x,j" />
      <Sub x={875} y={393} main="V" sub="y,j" />
      <Sub x={1006} y={409} main="M" sub="y,j" />
      <Sub x={820} y={480} main="V" sub="z,j" />
      <Sub x={822} y={612} main="M" sub="z,j" />
    </svg>
  );
}

function SectionPicture() {
  return (
    <svg viewBox="21 74 1134 840" className="mx-auto block h-[280px] w-[378px]" aria-label="Průřez">
      <defs>
        <pattern id="hatch" width="34" height="34" patternUnits="userSpaceOnUse" patternTransform="translate(332 190)">
          <path d="M-4 38L38-4M-4 4L4-4M30 38L38 30" stroke="#fff" strokeWidth="3" />
        </pattern>
      </defs>
      <rect x="331" y="193" width="544" height="544" fill="#b3b3b3" />
      <rect x="331" y="193" width="544" height="544" fill="url(#hatch)" stroke="#4d4d4d" strokeWidth="3" />
      <path d="M604 466H875M604 466V737" stroke="#555" strokeWidth="3" strokeDasharray="18 8 3 8" />
      <path d="M875 466H938M604 737V800" stroke="#f0f" strokeWidth="3" strokeDasharray="18 8 3 8" />
      <path d="M936 455v20l25-10zM593 798h20l-10 24z" fill="#f0f" />
      <circle cx="603" cy="465" r="7" fill="#f00" />
      <text x="947" y="502" fontSize="34" fill="#f0f">y</text>
      <text x="566" y="833" fontSize="34" fill="#f0f">z</text>
    </svg>
  );
}

function EditMemberDialog() {
  return (
    <div className="absolute bottom-[73px] left-[181px] right-[13px] top-[13px] flex flex-col border border-[#6e6e6e] bg-white shadow-[0_4px_18px_rgba(0,0,0,0.45)]">
      <div className="flex h-[30px] shrink-0 items-center pl-2">
        <AppLogo />
        <h2 className="ml-[5px]">Upravit prut</h2>
        <WindowButtons color="#000" minColor="#ccc" />
      </div>

      <div className="flex min-h-0 flex-1 flex-col bg-[#d1d1d6] px-[9px] pb-2 pt-[9px]">
        <div className="grid grid-cols-3 gap-2.5">
          <Field id="member-no" label="Prut č." value="4" readOnly />
          <div className="bg-white" />
          <Field id="line-no" label="Přiřadit linii č." value="10">
            <ToolButton name="pick" />
          </Field>
        </div>

        <div role="tablist" className="mt-2.5 flex h-[22px] items-end">
          <button role="tab" aria-selected="true" className="h-full bg-[#ebebeb] px-[9px] pt-1">Základní údaje</button>
          <button role="tab" aria-selected="false" className="h-5 bg-[#dedede] px-[13px] pt-0.5">Průřez</button>
        </div>

        <div className="grid min-h-0 flex-1 grid-cols-[378fr_388fr_378fr] grid-rows-[47px_2fr_1fr_47px] gap-2.5 bg-[#ebebeb] px-[9px] pb-2 pt-[9px]">
          <div className="bg-white">
            <Heading htmlFor="member-type">Typ prutu</Heading>
            <div className="relative mx-[5px] mt-1 flex h-[21px] items-center bg-[#e7e7f2] pl-[5px]">
              <span className="size-[11px] bg-[#57a7ff]" />
              <select id="member-type" className="h-full flex-1 appearance-none pl-[5px] pt-0.5 outline-none">
                <option>Nosník</option>
              </select>
              <Chevron />
            </div>
          </div>

          <Field id="nodes-no" label="Uzly č." value="2,9" readOnly />

          <div className="row-span-4 flex min-h-0 flex-col bg-white">
            <p className="h-[22px] px-[5px] leading-5">Typ prutu 'Nosník'</p>
            <BeamPicture />
            <p className="h-[22px] border-t border-[#e5e5e5] px-[5px] leading-5">R_M1 300/300</p>
            <SectionPicture />
            <div className="mt-auto px-[5px] pb-[5px]">
              <label htmlFor="pos-x" className="block h-[23px] leading-4">Místo x [m]</label>
              <div className="flex justify-between">
                <div className="flex h-5 w-[90px] items-center bg-[#e7e7f2]">
                  <input id="pos-x" defaultValue="0.000" className="w-11 pt-px text-right outline-none" />
                  <button aria-label="Seznam" className="relative h-full w-[22px]"><Chevron /></button>
                  <div className="flex w-3 flex-col items-center gap-[5px]">
                    <button aria-label="Zvýšit"><svg viewBox="0 0 6 3" className="block h-[3px] w-1.5"><path d="M0 3h6L3 0z" fill="#444" /></svg></button>
                    <button aria-label="Snížit"><svg viewBox="0 0 6 3" className="block h-[3px] w-1.5"><path d="M0 0h6L3 3z" fill="#444" /></svg></button>
                  </div>
                  <button aria-label="Další" className="ml-1"><svg viewBox="0 0 4 7" className="h-[7px] w-1"><path d="M0 0v7l4-3.500z" fill="#111" /></svg></button>
                </div>
                <div className="flex gap-[3px]">
                  <ToolButton name="info" />
                  <ToolButton name="tshape" state="off" />
                </div>
              </div>
              <div className="mt-2 flex gap-[3px]">
                <ToolButton name="image" />
                <div className="ml-auto flex gap-[3px]">
                  <ToolButton name="secPoints" state="pressed" />
                  <ToolButton name="sec100" />
                  <ToolButton name="secAxes" state="pressed" />
                  <ToolButton name="secSC" />
                  <ToolButton name="secI" />
                  <ToolButton name="secIGray" state="off" />
                  <ToolButton name="sec123" state="off" />
                  <ToolButton name="secGrid" />
                  <button aria-label="Tisk" className="flex h-[21px] w-[37px] items-center justify-center gap-1.5 bg-[#cce4f7]">
                    <svg viewBox="0 0 20 20" className="size-4"><Printer /></svg>
                    <svg viewBox="0 0 6 4" className="h-1 w-1.5"><path d="M0 0h6L3 4z" fill="#111" /></svg>
                  </button>
                  <ToolButton name="zoomOff" />
                </div>
              </div>
            </div>
          </div>

          <div className="bg-white">
            <Heading>Možnosti</Heading>
            <div className="flex flex-col gap-3 px-[5px] pt-2">
              <div>
                <Option label="Uzly na prutu" />
                <Option label="Klouby..." />
                <Option label="Excentricity..." />
                <Option label="Podpora..." />
                <Option label="Příčné výztuhy..." disabled />
                <Option label="Nelinearita..." />
              </div>
              <div>
                <Option label="Vnitřní výsledkové body..." />
                <Option label="Úpravy konců..." />
              </div>
              <Option label="Deaktivovat pro výpočet" checked>
                <span className="pointer-events-none absolute -left-[7px] -right-3 -top-1 h-8 border-[3px] border-[#ed1c24]" />
                <svg viewBox="0 0 60 16" className="pointer-events-none absolute right-full top-0.5 mr-3.5 h-4 w-[60px]">
                  <path d="M2 7.500L46 8.500" stroke="#ed1c24" strokeWidth="3" strokeLinecap="round" />
                  <path d="M43 0l17 8.500L43 16z" fill="#ed1c24" />
                </svg>
              </Option>
            </div>
          </div>

          <div className="row-span-2 flex flex-col bg-white">
            <Heading>Informace | Analytické</Heading>
            <div className="flex-1 bg-[linear-gradient(to_right,#e0e0e0_19px,#fff_19px)]">
              <InfoTable />
            </div>
            <div className="flex h-[29px] justify-end px-[5px] pt-1">
              <ToolButton name="meshFlash" />
            </div>
          </div>

          <div className="bg-white" />

          <div className="col-span-2 bg-white">
            <Heading htmlFor="comment">Komentář</Heading>
            <div className="mt-1 flex gap-[5px] px-[5px]">
              <div className="relative h-[21px] flex-1 bg-[#e7e7f2]">
                <select id="comment" className="size-full appearance-none outline-none">
                  <option></option>
                </select>
                <Chevron />
              </div>
              <ToolButton name="stack" state="off" />
            </div>
          </div>
        </div>
      </div>

      <div className="flex h-[42px] shrink-0 items-center justify-between pl-[9px] pr-2.5">
        <div className="flex gap-2.5">
          {['units', 'colors', 'monitor', 'selList', 'fx'].map((name) => (
            <ToolButton key={name} name={name} />
          ))}
        </div>
        <div className="flex gap-2.5 leading-[18px]">
          <button className="h-[21px] w-[81px] border-2 border-[#0078d7] bg-[#e1e1e1]">OK</button>
          <button className="h-[21px] w-[81px] border border-[#adadad] bg-[#e1e1e1] pt-px">Storno</button>
          <button className="h-[21px] w-[81px] border border-[#adadad] bg-[#e1e1e1] pt-px">Použít</button>
        </div>
      </div>
      <Grip />
    </div>
  );
}

const Grip = () => (
  <svg viewBox="0 0 8 8" className="absolute bottom-0.5 right-[3px] size-2" aria-hidden="true">
    <path d="M6 0h2v2H6zM3 3h2v2H3zM6 3h2v2H6zM0 6h2v2H0zM3 6h2v2H3zM6 6h2v2H6z" fill="#bbb" />
  </svg>
);

export default function App() {
  return (
    <div className="flex h-screen min-h-[900px] flex-col overflow-hidden border border-t-[#4f4f66] border-x-[#a0a0a0] border-b-[#a0a0a0] bg-white font-['Noto_Sans','Open_Sans',sans-serif] text-[11px] text-black">
      <header className="flex h-[30px] shrink-0 items-center pl-2 text-[#999]">
        <AppLogo />
        <h1 className="ml-[5px]">Dlubal RFEM | 6.01.0001 | RFEM-Priklad-06.rf5</h1>
        <WindowButtons color="#999" minColor="#999" />
      </header>

      <nav className="flex h-5 shrink-0 items-center bg-[#f7f7f7]">
        <svg viewBox="0 0 16 12" className="h-3 w-4" aria-hidden="true">
          <path d="M0 0h16v12H0z" fill="#1f2f78" />
          <path d="M0 8h16M5 1v10M0 3l5-1 10 4" fill="none" stroke="#fff" />
        </svg>
        {menus.map((menu) => (
          <button key={menu} className="px-2">{menu}</button>
        ))}
        <span className="ml-auto mr-2">Online License 30 | Robert Martinec | Dlubal Software s.r.o.</span>
        {['M1 8h6', 'M3 3V1h6v5H7M1 3h6v6H1z', 'M1 1l7 7M8 1L1 8'].map((d, i) => (
          <button key={d} aria-label={['Minimalizovat', 'Obnovit', 'Zavřít'][i]} className="mr-px flex h-[18px] w-[17px] items-center justify-center border border-[#ddd] bg-white">
            <svg viewBox="0 0 10 10" className="size-2.5">
              <path d={d} fill="none" stroke="#6c7a8c" strokeWidth={i === 1 ? 1.3 : 2} />
            </svg>
          </button>
        ))}
      </nav>

      <div className="flex h-7 shrink-0 items-center border-t border-[#dcdcdc] bg-[#f7f7f7]">
        <Handle first />
        <BarItems items={barOne} />
        <div className="relative flex h-[21px] min-w-0 flex-1 items-center bg-[#e7e7f2] pl-1.5">
          <span className="mr-[3px] size-[11px] bg-[#ccffff]" />
          <span className="mr-[3px] size-[11px] bg-[#ccffff]" />
          <span className="h-[13px] w-[30px] bg-[#c0504d] text-center leading-[13px] text-white">QI A</span>
          <span className="w-[30px] pl-[5px]">ZS2</span>
          <span className="h-[15px] w-px bg-white" />
          <select aria-label="Zatěžovací stav" className="h-full flex-1 appearance-none pl-1.5 outline-none">
            <option>Užitné zatížení</option>
          </select>
          <Chevron />
        </div>
        <button aria-label="Předchozí" className="ml-px flex h-[21px] w-[15px] items-center justify-center bg-[#e7e7f2]">
          <svg viewBox="0 0 4 8" className="h-2 w-1"><path d="M4 0v8L0 4z" /></svg>
        </button>
        <button aria-label="Následující" className="mx-px flex h-[21px] w-[15px] items-center justify-center bg-[#e7e7f2]">
          <svg viewBox="0 0 4 8" className="h-2 w-1"><path d="M0 0v8l4-4z" /></svg>
        </button>
        <BarItems items={barOneEnd} />
      </div>

      <div className="flex h-7 shrink-0 items-center border-t border-[#dcdcdc] bg-[#f7f7f7]">
        <Handle first />
        <BarItems items={barTwo} />
        <div className="relative flex h-[21px] min-w-0 flex-1 items-center bg-[#e7e7f2] pl-[5px]">
          <span className="size-[11px] bg-[#ccffff]" />
          <select aria-label="Souřadný systém" className="h-full flex-1 appearance-none pl-[5px] outline-none">
            <option>1 - Globální XYZ</option>
          </select>
          <Chevron />
        </div>
        <BarItems items={barTwoEnd} />
      </div>

      <main className="relative min-h-0 flex-1 bg-[#fdfdfd]">
        <ModelView />
        <div className="relative w-fit pl-[5px] pt-1 leading-[17px]">
          <p>ZS2 - Užitné zatížení</p>
          <p>Zatížení [kN/m²]</p>
        </div>
        <EditMemberDialog />
      </main>

      <footer className="relative flex h-[23px] shrink-0 items-center bg-[#f7f7f7]">
        <div className="ml-auto flex h-[18px] gap-0.5 pr-px">
          {['ÚCHOP', 'RASTR', 'LRASTR', 'OUCHOP'].map((mode) => (
            <button
              key={mode}
              className={`border px-[3px] ${mode === 'LRASTR' ? 'border-transparent' : 'border-b-white border-l-[#bbb] border-r-white border-t-[#bbb] bg-[#ececec]'}`}
            >
              {mode}
            </button>
          ))}
        </div>
        <div className="h-[19px] w-[104px] border-l border-[#d4d4d4]" />
        <div className="h-[19px] w-[106px] border-l border-[#d4d4d4]" />
        <div className="h-[19px] w-[156px] border-l border-[#d4d4d4] pl-1 leading-[19px]">SS: Globální XYZ</div>
        <div className="h-[19px] w-[66px] border-l border-[#d4d4d4] pl-1 leading-[19px]">Rovina: XY</div>
        <div className="h-[19px] w-[76px] border-l border-[#d4d4d4]" />
        <div className="h-[19px] w-[76px] border-l border-[#d4d4d4]" />
        <div className="h-[19px] w-[76px] border-l border-[#d4d4d4]" />
        <div className="h-[19px] w-[19px] border-l border-[#d4d4d4]" />
        <Grip />
      </footer>
    </div>
  );
}
